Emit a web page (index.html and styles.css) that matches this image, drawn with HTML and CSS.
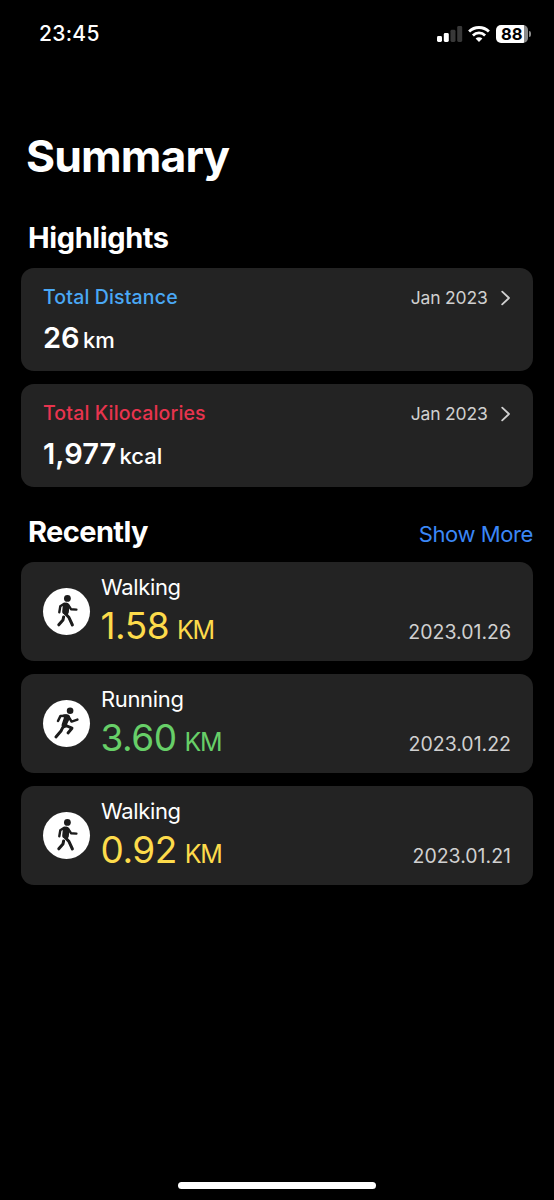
FILE: index.html
```html
<!DOCTYPE html>
<html lang="en">
<head>
    <meta charset="UTF-8">
    <meta name="viewport" content="width=device-width, initial-scale=1.0">
    <title>Summary</title>
    <link rel="stylesheet" href="styles.css">
</head>
<body>
    <!-- Shared icons -->
    <svg class="sprite" aria-hidden="true">
        <symbol id="icon-chevron" viewBox="0 0 10 16">
            <path d="M1.2 1.6 L8 8 L1.2 14.4" fill="none" stroke="currentColor" stroke-width="1.8" stroke-linecap="round" stroke-linejoin="round"/>
        </symbol>
        <symbol id="icon-walk" viewBox="0 0 47 47">
            <circle cx="24.4" cy="10.4" r="3.4" fill="currentColor"/>
            <path d="M20 15.6 Q22.8 13.8 25.2 15.2 Q26.6 16.2 26.4 18 L25.8 24.6 Q25.4 26.8 23 26.6 L20.4 26 Q19 25.4 19.2 23.6 Z" fill="currentColor"/>
            <g fill="none" stroke="currentColor" stroke-width="2.4" stroke-linecap="round" stroke-linejoin="round">
                <path d="M21.2 15.8 L17.3 18.3 L16.3 24.2"/>
                <path d="M25.2 17 L28 21.2 L33.4 21.6"/>
                <path d="M22.2 25.4 L26 29.6 L29.4 37" stroke-width="3"/>
                <path d="M20.6 29 L20 32 L15.8 36.8" stroke-width="3"/>
            </g>
        </symbol>
        <symbol id="icon-run" viewBox="0 0 47 47">
            <circle cx="27.1" cy="10.7" r="3.3" fill="currentColor"/>
            <path d="M20.2 14.6 Q25.2 13.8 26.6 15.6 Q27.6 17 26.6 19 L24 24.4 L25.4 26.4 L20.6 28.4 Q17.8 26.4 18.8 24 L20.8 18 Z" fill="currentColor"/>
            <g fill="none" stroke="currentColor" stroke-width="2.5" stroke-linecap="round" stroke-linejoin="round">
                <path d="M23.4 15.8 L17.4 16.1 L15 21"/>
                <path d="M26 17.4 L28.6 21.6 L34.4 19.6"/>
                <path d="M21.6 25 L29 28.2 L25 33" stroke-width="2.9"/>
                <path d="M19.8 27.4 L18 31 L12.9 37" stroke-width="2.9"/>
            </g>
        </symbol>
    </svg>

    <div class="screen">
        <div class="status-bar">
            <div class="time">23:45</div>
            <div class="status-icons">
                <svg class="signal" viewBox="0 0 26 16">
                    <rect x="0" y="10" width="5" height="6" rx="1.4" fill="#fff"/>
                    <rect x="6.8" y="7" width="5" height="9" rx="1.4" fill="#fff"/>
                    <rect x="13.5" y="3.8" width="5" height="12.2" rx="1.4" fill="#383838"/>
                    <rect x="20.2" y="0" width="5" height="16" rx="1.4" fill="#383838"/>
                </svg>
                <svg class="wifi" viewBox="0 0 22 16">
                    <g fill="none" stroke="#fff" stroke-width="2.8">
                        <path d="M1.1 5.5 A14.2 14.2 0 0 1 20.9 5.5"/>
                        <path d="M4.9 9.4 A8.8 8.8 0 0 1 17.1 9.4"/>
                    </g>
                    <path d="M7.6 12.5 A4.9 4.9 0 0 1 14.4 12.5 L11 15.9 Z" fill="#fff"/>
                </svg>
                <div class="battery"><span>88</span></div>
                <div class="battery-tip"></div>
            </div>
        </div>

        <h1 class="page-title">Summary</h1>

        <div class="section-header">
            <h2>Highlights</h2>
        </div>
        <div class="cards">
            <div class="card highlight">
                <div class="card-top">
                    <h3 class="blue">Total Distance</h3>
                    <span class="month">Jan 2023</span>
                    <svg class="chevron"><use href="#icon-chevron"/></svg>
                </div>
                <div class="total">26 <small>km</small></div>
            </div>
            <div class="card highlight">
                <div class="card-top">
                    <h3 class="red">Total Kilocalories</h3>
                    <span class="month">Jan 2023</span>
                    <svg class="chevron"><use href="#icon-chevron"/></svg>
                </div>
                <div class="total">1,977 <small>kcal</small></div>
            </div>
        </div>

        <div class="section-header recent-header">
            <h2>Recently</h2>
            <a href="#" class="show-more">Show More</a>
        </div>
        <div class="cards">
            <div class="card activity">
                <svg class="avatar"><use href="#icon-walk"/></svg>
                <div class="info">
                    <div class="name">Walking</div>
                    <div class="distance yellow">1.58 <small>KM</small></div>
                </div>
                <div class="date">2023.01.26</div>
            </div>
            <div class="card activity">
                <svg class="avatar"><use href="#icon-run"/></svg>
                <div class="info">
                    <div class="name">Running</div>
                    <div class="distance green">3.60 <small>KM</small></div>
                </div>
                <div class="date">2023.01.22</div>
            </div>
            <div class="card activity">
                <svg class="avatar"><use href="#icon-walk"/></svg>
                <div class="info">
                    <div class="name">Walking</div>
                    <div class="distance yellow">0.92 <small>KM</small></div>
                </div>
                <div class="date">2023.01.21</div>
            </div>
        </div>

        <div class="home-indicator"></div>
    </div>
</body>
</html>
```

FILE: styles.css
```css
:root {
    --bg-color: #000;
    --card-bg: #232323;
    --text-color: #fff;
    --muted: #d0d0d0;
    --blue: #4aa8f5;
    --red: #e8344e;
    --link: #3b87f7;
    --yellow: #fddb4b;
    --green: #67cf68;
}

* {
    margin: 0;
    padding: 0;
    box-sizing: border-box;
}

body {
    font-family: Inter, "Liberation Sans", sans-serif;
    background: var(--bg-color);
    color: var(--text-color);
}

.sprite {
    display: none;
}

.screen {
    height: 1200px;
    padding: 0 21px 11px;
    display: flex;
    flex-direction: column;
}

.status-bar {
    height: 67px;
    padding: 0 2px 0 18px;
    display: flex;
    align-items: center;
    justify-content: space-between;
}

.time {
    font-size: 21px;
    font-weight: 500;
    letter-spacing: 0.3px;
}

.status-icons {
    display: flex;
    align-items: center;
}

.signal {
    width: 26px;
    height: 16px;
    margin-right: 5px;
}

.wifi {
    width: 22px;
    height: 16px;
    margin-right: 6px;
}

.battery {
    width: 32px;
    height: 18px;
    border-radius: 5px;
    background: linear-gradient(to right, #fff 28px, #8a8a8a 28px);
    color: #000;
    font-size: 16.5px;
    font-weight: 700;
    line-height: 18px;
    padding-left: 5px;
}

.battery-tip {
    width: 2px;
    height: 6px;
    margin-left: 1px;
    border-radius: 0 2px 2px 0;
    background: #8a8a8a;
}

.page-title {
    font-size: 44.5px;
    font-weight: 700;
    line-height: 60px;
    letter-spacing: -0.9px;
    margin: 59px 0 0 5px;
}

.section-header {
    display: flex;
    align-items: center;
    justify-content: space-between;
    height: 40px;
    margin: 31.5px 0 10.5px;
    padding-left: 7px;
}

.recent-header {
    margin: 24px 0 11px;
}

.section-header h2 {
    font-size: 29px;
    font-weight: 650;
    letter-spacing: -0.4px;
}

.recent-header h2 {
    letter-spacing: -0.6px;
}

.show-more {
    color: var(--link);
    font-size: 22px;
    letter-spacing: -0.4px;
    text-decoration: none;
    padding-top: 5px;
}

.cards {
    display: flex;
    flex-direction: column;
    gap: 13px;
}

.card {
    background: var(--card-bg);
    border-radius: 13px;
    padding: 0 22px;
}

.highlight {
    height: 103px;
    padding-top: 14px;
}

.card-top {
    display: flex;
    align-items: center;
    height: 30px;
}

.card-top h3 {
    flex: 1;
    font-size: 19.5px;
    font-weight: 500;
    letter-spacing: 0.15px;
}

.month {
    color: var(--muted);
    font-size: 17.5px;
    letter-spacing: -0.2px;
    padding-top: 1px;
}

.chevron {
    width: 10px;
    height: 16px;
    margin: 2px 0 0 13.5px;
    color: var(--muted);
}

.total {
    font-size: 29px;
    font-weight: 600;
    line-height: 40px;
    margin-top: 6px;
    word-spacing: -4px;
}

.total small {
    font-size: 22px;
    font-weight: 500;
}

.blue {
    color: var(--blue);
}

.red {
    color: var(--red);
}

.activity {
    display: flex;
    align-items: center;
    height: 99px;
}

.avatar {
    width: 47px;
    height: 47px;
    border-radius: 50%;
    background: #fff;
    color: #1c1c1c;
}

.info {
    flex: 1;
    padding: 2px 0 0 11px;
}

.name {
    font-size: 22px;
    line-height: 30px;
    letter-spacing: -0.35px;
}

.distance {
    font-size: 37px;
    line-height: 48px;
    letter-spacing: -0.5px;
    word-spacing: -2px;
    margin-left: -0.5px;
}

.distance small {
    font-size: 25px;
    letter-spacing: -1.2px;
}

.yellow {
    color: var(--yellow);
}

.green {
    color: var(--green);
}

.date {
    color: var(--muted);
    font-size: 19.5px;
    padding-top: 40px;
}

.home-indicator {
    width: 198px;
    height: 7px;
    border-radius: 4px;
    background: #fff;
    margin: auto auto 0;
}
```
